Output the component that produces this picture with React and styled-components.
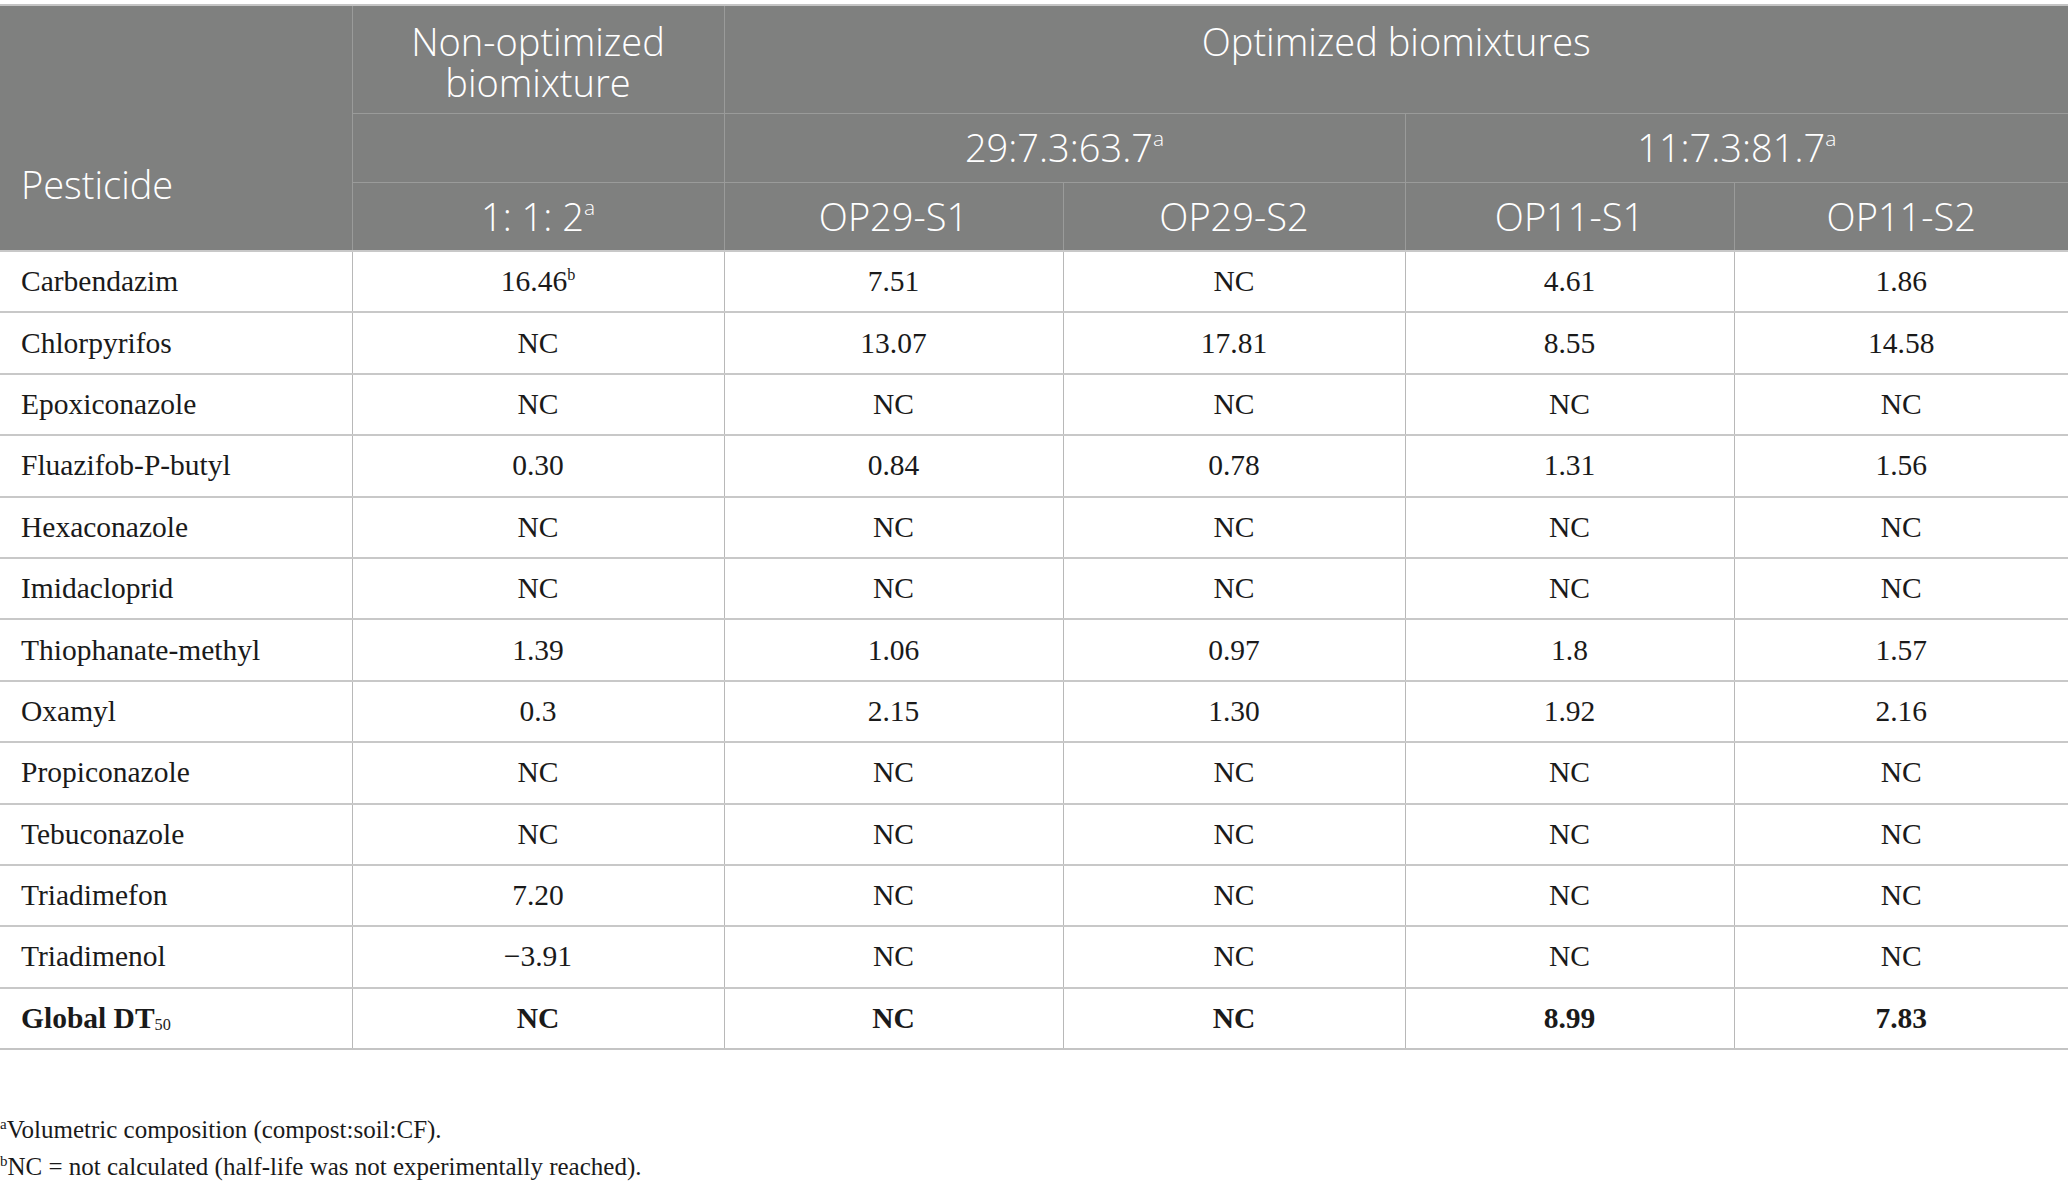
import React from 'react';
import styled, { createGlobalStyle } from 'styled-components';

const GlobalStyle = createGlobalStyle`
  body {
    margin: 0;
    background: #fff;
  }
`;

const Page = styled.div`
  width: 2068px;
  padding-top: 4px;
`;

const Table = styled.table`
  width: 2068px;
  border-collapse: collapse;
  table-layout: fixed;
  border-top: 2px solid #c4c4c4;
  border-bottom: 2px solid #c4c4c4;
`;

const HeadCell = styled.th`
  background: #7f807f;
  color: #fff;
  font-family: "Open Sans", "Noto Sans", sans-serif;
  font-weight: 350;
  font-size: 38px;
  line-height: 41px;
  text-align: ${p => (p.$left ? 'left' : 'center')};
  vertical-align: ${p => p.$valign || 'middle'};
  padding: 0 10px;
  padding-left: ${p => (p.$left ? '21px' : '10px')};
  padding-top: ${p => (p.$valign === 'top' ? '15px' : '0')};
  padding-bottom: ${p => (p.$valign === 'bottom' ? '45px' : '0')};
  height: ${p => p.$h || 68}px;
  border: 1px solid #9a9b9a;
  border-top: none;
  &:first-child { border-left: none; }
  &:last-child { border-right: none; }
  box-sizing: border-box;
`;

const HeadSup = styled.sup`
  font-size: 0.55em;
  vertical-align: 0.75em;
  line-height: 0;
`;

const Row = styled.tr`
  height: 61.4px;
`;

const Cell = styled.td`
  font-family: "Liberation Serif", "Times New Roman", serif;
  font-size: 29.5px;
  font-weight: ${p => (p.$bold ? 700 : 400)};
  color: #1a1a1a;
  text-align: ${p => (p.$left ? 'left' : 'center')};
  padding: ${p => (p.$left ? '0 0 0 21px' : '0')};
  border-top: 2px solid #c8c8c8;
  border-left: 1px solid #b8b8b8;
  border-right: 1px solid #b8b8b8;
  &:first-child { border-left: none; }
  &:last-child { border-right: none; }
`;

const Sup = styled.sup`
  font-size: 0.55em;
  vertical-align: 0.7em;
  line-height: 0;
`;

const Sub = styled.sub`
  font-size: 0.55em;
  font-weight: 400;
  vertical-align: -0.15em;
  line-height: 0;
`;

const Notes = styled.div`
  margin-top: 61px;
  font-family: "Liberation Serif", "Times New Roman", serif;
  font-size: 25px;
  color: #1a1a1a;
`;

const Note = styled.p`
  margin: 0;
  line-height: 37px;
`;

const NoteMark = styled.sup`
  font-size: 0.6em;
  vertical-align: 0.6em;
  line-height: 0;
`;

const rows = [
  ['Carbendazim', ['16.46', 'b'], '7.51', 'NC', '4.61', '1.86'],
  ['Chlorpyrifos', 'NC', '13.07', '17.81', '8.55', '14.58'],
  ['Epoxiconazole', 'NC', 'NC', 'NC', 'NC', 'NC'],
  ['Fluazifob-P-butyl', '0.30', '0.84', '0.78', '1.31', '1.56'],
  ['Hexaconazole', 'NC', 'NC', 'NC', 'NC', 'NC'],
  ['Imidacloprid', 'NC', 'NC', 'NC', 'NC', 'NC'],
  ['Thiophanate-methyl', '1.39', '1.06', '0.97', '1.8', '1.57'],
  ['Oxamyl', '0.3', '2.15', '1.30', '1.92', '2.16'],
  ['Propiconazole', 'NC', 'NC', 'NC', 'NC', 'NC'],
  ['Tebuconazole', 'NC', 'NC', 'NC', 'NC', 'NC'],
  ['Triadimefon', '7.20', 'NC', 'NC', 'NC', 'NC'],
  ['Triadimenol', '\u22123.91', 'NC', 'NC', 'NC', 'NC'],
];

const renderValue = v =>
  Array.isArray(v) ? (
    <>
      {v[0]}
      <Sup>{v[1]}</Sup>
    </>
  ) : (
    v
  );

const App = () => (
  <Page>
    <GlobalStyle />
    <Table>
      <colgroup>
        <col style={{ width: 352 }} />
        <col style={{ width: 372 }} />
        <col style={{ width: 339 }} />
        <col style={{ width: 342 }} />
        <col style={{ width: 329 }} />
        <col style={{ width: 334 }} />
      </colgroup>
      <thead>
        <tr>
          <HeadCell rowSpan={3} $left $valign="bottom">Pesticide</HeadCell>
          <HeadCell $valign="top" $h={108}>Non-optimized biomixture</HeadCell>
          <HeadCell colSpan={4} $valign="top" $h={108}>Optimized biomixtures</HeadCell>
        </tr>
        <tr>
          <HeadCell $h={69} />
          <HeadCell colSpan={2} $h={69}>29:7.3:63.7<HeadSup>a</HeadSup></HeadCell>
          <HeadCell colSpan={2} $h={69}>11:7.3:81.7<HeadSup>a</HeadSup></HeadCell>
        </tr>
        <tr>
          <HeadCell $h={69}>1: 1: 2<HeadSup>a</HeadSup></HeadCell>
          <HeadCell $h={69}>OP29-S1</HeadCell>
          <HeadCell $h={69}>OP29-S2</HeadCell>
          <HeadCell $h={69}>OP11-S1</HeadCell>
          <HeadCell $h={69}>OP11-S2</HeadCell>
        </tr>
      </thead>
      <tbody>
        {rows.map(r => (
          <Row key={r[0]}>
            <Cell $left>{r[0]}</Cell>
            {r.slice(1).map((v, i) => (
              <Cell key={i}>{renderValue(v)}</Cell>
            ))}
          </Row>
        ))}
        <Row>
          <Cell $left $bold>Global DT<Sub>50</Sub></Cell>
          <Cell $bold>NC</Cell>
          <Cell $bold>NC</Cell>
          <Cell $bold>NC</Cell>
          <Cell $bold>8.99</Cell>
          <Cell $bold>7.83</Cell>
        </Row>
      </tbody>
    </Table>
    <Notes>
      <Note><NoteMark>a</NoteMark>Volumetric composition (compost:soil:CF).</Note>
      <Note><NoteMark>b</NoteMark>NC = not calculated (half-life was not experimentally reached).</Note>
    </Notes>
  </Page>
);

export default App;
